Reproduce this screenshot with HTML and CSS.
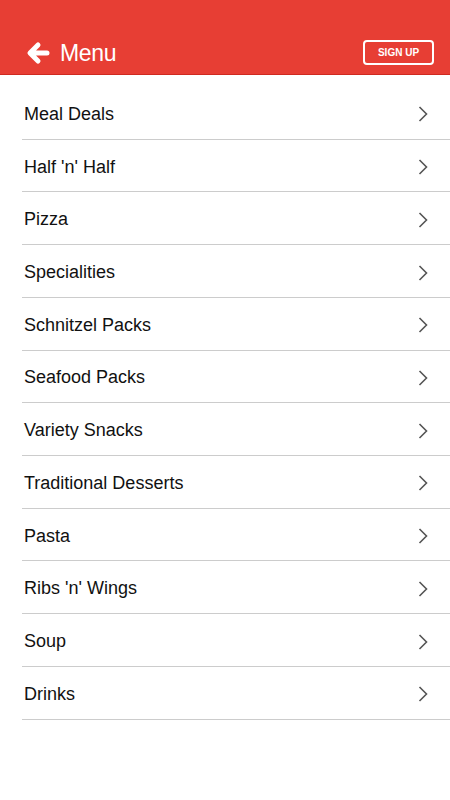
FILE: index.html
```html
<!DOCTYPE html>
<html lang="en">
<head>
    <meta charset="UTF-8">
    <meta name="viewport" content="width=device-width, initial-scale=1.0">
    <title>Menu</title>
    <link rel="stylesheet" href="styles.css">
</head>
<body>
    <div class="header">
        <div class="back">
            <svg class="back-icon" width="24" height="24" viewBox="0 0 24 24">
                <path d="M21 12H5M12 4L4 12L12 20" fill="none" stroke="#fff" stroke-width="5" stroke-linecap="round" stroke-linejoin="round"/>
            </svg>
            <span class="title">Menu</span>
        </div>
        <button class="signup">SIGN UP</button>
    </div>

    <ul class="menu">
        <li class="item"><span>Meal Deals</span><svg class="chevron" width="10" height="16" viewBox="0 0 10 16"><path d="M1.5 1L8.5 8L1.5 15" fill="none" stroke="#555" stroke-width="1.6"/></svg></li>
        <li class="item"><span>Half 'n' Half</span><svg class="chevron" width="10" height="16" viewBox="0 0 10 16"><path d="M1.5 1L8.5 8L1.5 15" fill="none" stroke="#555" stroke-width="1.6"/></svg></li>
        <li class="item"><span>Pizza</span><svg class="chevron" width="10" height="16" viewBox="0 0 10 16"><path d="M1.5 1L8.5 8L1.5 15" fill="none" stroke="#555" stroke-width="1.6"/></svg></li>
        <li class="item"><span>Specialities</span><svg class="chevron" width="10" height="16" viewBox="0 0 10 16"><path d="M1.5 1L8.5 8L1.5 15" fill="none" stroke="#555" stroke-width="1.6"/></svg></li>
        <li class="item"><span>Schnitzel Packs</span><svg class="chevron" width="10" height="16" viewBox="0 0 10 16"><path d="M1.5 1L8.5 8L1.5 15" fill="none" stroke="#555" stroke-width="1.6"/></svg></li>
        <li class="item"><span>Seafood Packs</span><svg class="chevron" width="10" height="16" viewBox="0 0 10 16"><path d="M1.5 1L8.5 8L1.5 15" fill="none" stroke="#555" stroke-width="1.6"/></svg></li>
        <li class="item"><span>Variety Snacks</span><svg class="chevron" width="10" height="16" viewBox="0 0 10 16"><path d="M1.5 1L8.5 8L1.5 15" fill="none" stroke="#555" stroke-width="1.6"/></svg></li>
        <li class="item"><span>Traditional Desserts</span><svg class="chevron" width="10" height="16" viewBox="0 0 10 16"><path d="M1.5 1L8.5 8L1.5 15" fill="none" stroke="#555" stroke-width="1.6"/></svg></li>
        <li class="item"><span>Pasta</span><svg class="chevron" width="10" height="16" viewBox="0 0 10 16"><path d="M1.5 1L8.5 8L1.5 15" fill="none" stroke="#555" stroke-width="1.6"/></svg></li>
        <li class="item"><span>Ribs 'n' Wings</span><svg class="chevron" width="10" height="16" viewBox="0 0 10 16"><path d="M1.5 1L8.5 8L1.5 15" fill="none" stroke="#555" stroke-width="1.6"/></svg></li>
        <li class="item"><span>Soup</span><svg class="chevron" width="10" height="16" viewBox="0 0 10 16"><path d="M1.5 1L8.5 8L1.5 15" fill="none" stroke="#555" stroke-width="1.6"/></svg></li>
        <li class="item"><span>Drinks</span><svg class="chevron" width="10" height="16" viewBox="0 0 10 16"><path d="M1.5 1L8.5 8L1.5 15" fill="none" stroke="#555" stroke-width="1.6"/></svg></li>
    </ul>
</body>
</html>
```

FILE: styles.css
```css
body {
    font-family: 'Liberation Sans', Arial, sans-serif;
    margin: 0;
    padding: 0;
    background: #fff;
    color: #111;
}

.header {
    height: 75px;
    box-sizing: border-box;
    background: #e73e34;
    border-bottom: 1px solid #cf2a20;
    display: flex;
    align-items: flex-end;
    justify-content: space-between;
    padding: 0 16px 8px 26px;
}

.back {
    display: flex;
    align-items: center;
    gap: 10px;
    height: 26px;
}

.back-icon {
    display: block;
}

.title {
    color: #fff;
    font-size: 23px;
    font-weight: 300;
    letter-spacing: -0.3px;
}

.signup {
    width: 71px;
    height: 25px;
    margin-bottom: 1px;
    background: transparent;
    border: 2px solid #fff;
    border-radius: 4px;
    color: #fff;
    font-family: 'Liberation Sans', Arial, sans-serif;
    font-size: 10px;
    font-weight: bold;
    padding: 0;
}

.menu {
    list-style: none;
    margin: 0;
    padding: 12px 0 0 22px;
}

.item {
    height: 52.73px;
    box-sizing: border-box;
    border-bottom: 1px solid #ccc;
    display: flex;
    align-items: center;
    justify-content: space-between;
    padding: 3px 22px 0 2px;
    font-size: 18px;
}

.chevron {
    display: block;
}
```
